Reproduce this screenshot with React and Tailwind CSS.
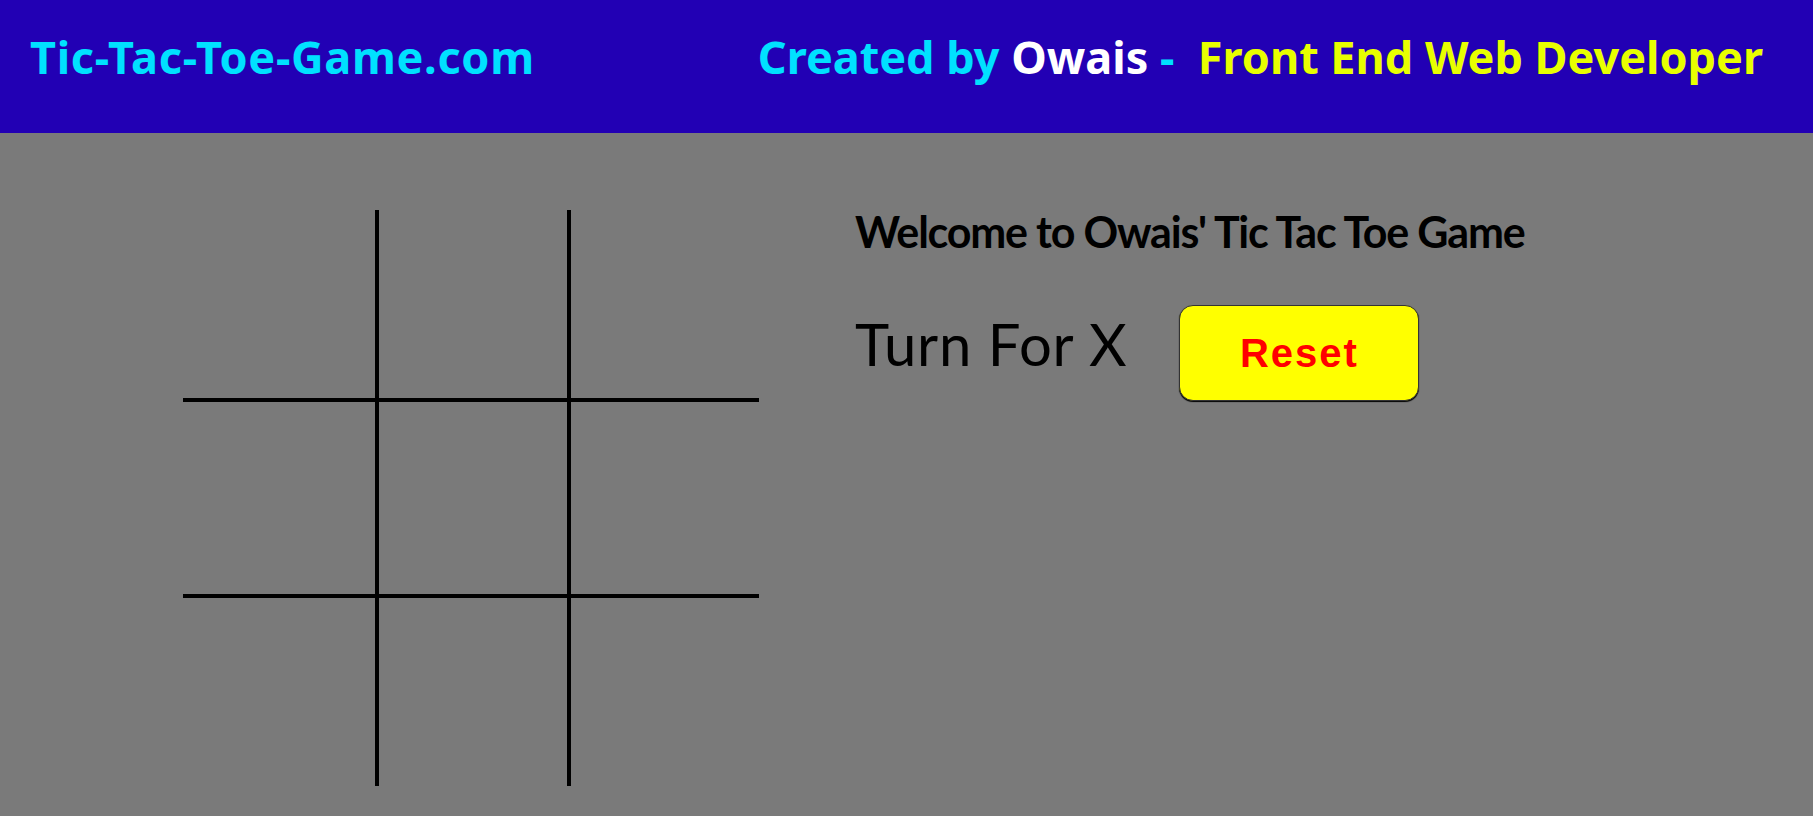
import React, { useState } from "react";

function Cell({ value, className, onClick }) {
  return (
    <div
      onClick={onClick}
      className={
        "w-[192px] h-[192px] flex items-center justify-center text-[120px] font-bold text-black cursor-pointer " +
        className
      }
    >
      {value}
    </div>
  );
}

export default function App() {
  const [board, setBoard] = useState(Array(9).fill(""));
  const [turn, setTurn] = useState("X");

  const play = (i) => {
    if (board[i]) return;
    const next = [...board];
    next[i] = turn;
    setBoard(next);
    setTurn(turn === "X" ? "O" : "X");
  };

  const reset = () => {
    setBoard(Array(9).fill(""));
    setTurn("X");
  };

  // borders per cell so the lines land where the original's do
  const borders = [
    "border-b-4 border-black",
    "border-l-4 border-b-4 border-black",
    "border-l-4 border-b-4 border-black",
    "",
    "border-l-4 border-black",
    "border-l-4 border-black",
    "border-t-4 border-black",
    "border-l-4 border-t-4 border-black",
    "border-l-4 border-t-4 border-black",
  ];

  return (
    <div className="min-h-screen bg-[#7a7a7a] font-['Lato',sans-serif]">
      <nav className="h-[133px] bg-[#2200b4] flex justify-between items-start pt-[34px] pl-[30px] pr-[50px] font-['Noto_Sans',sans-serif] font-bold text-[45px] leading-none">
        <div className="text-[#00e1ff] tracking-[0.7px]">Tic-Tac-Toe-Game.com</div>
        <div className="text-[#00e1ff] whitespace-pre">
          Created by <span className="text-white">Owais</span>{" -  "}
          <span className="text-[#e8ff00]">Front End Web Developer</span>
        </div>
      </nav>

      <main className="flex pt-[77px] pl-[183px] gap-[96px]">
        <div className="grid grid-cols-3 w-[576px]">
          {board.map((v, i) => (
            <Cell key={i} value={v} className={borders[i]} onClick={() => play(i)} />
          ))}
        </div>

        <div className="flex flex-col">
          <h1 className="text-[43px] leading-none font-bold text-black tracking-[-1.2px]">
            Welcome to Owais' Tic Tac Toe Game
          </h1>
          <div className="flex items-start mt-[52px]">
            <span className="mt-[10px] text-[58px] leading-none text-black tracking-[0.8px]">
              Turn For {turn}
            </span>
            <button
              onClick={reset}
              className="ml-[52px] w-[240px] h-[96px] bg-[#ffff00] border border-[#333] rounded-[14px] shadow-[0_1px_1px_#000] text-[#ff0000] font-['Liberation_Sans',Arial,sans-serif] font-bold text-[40px] tracking-[2px]"
            >
              Reset
            </button>
          </div>
        </div>
      </main>
    </div>
  );
}
